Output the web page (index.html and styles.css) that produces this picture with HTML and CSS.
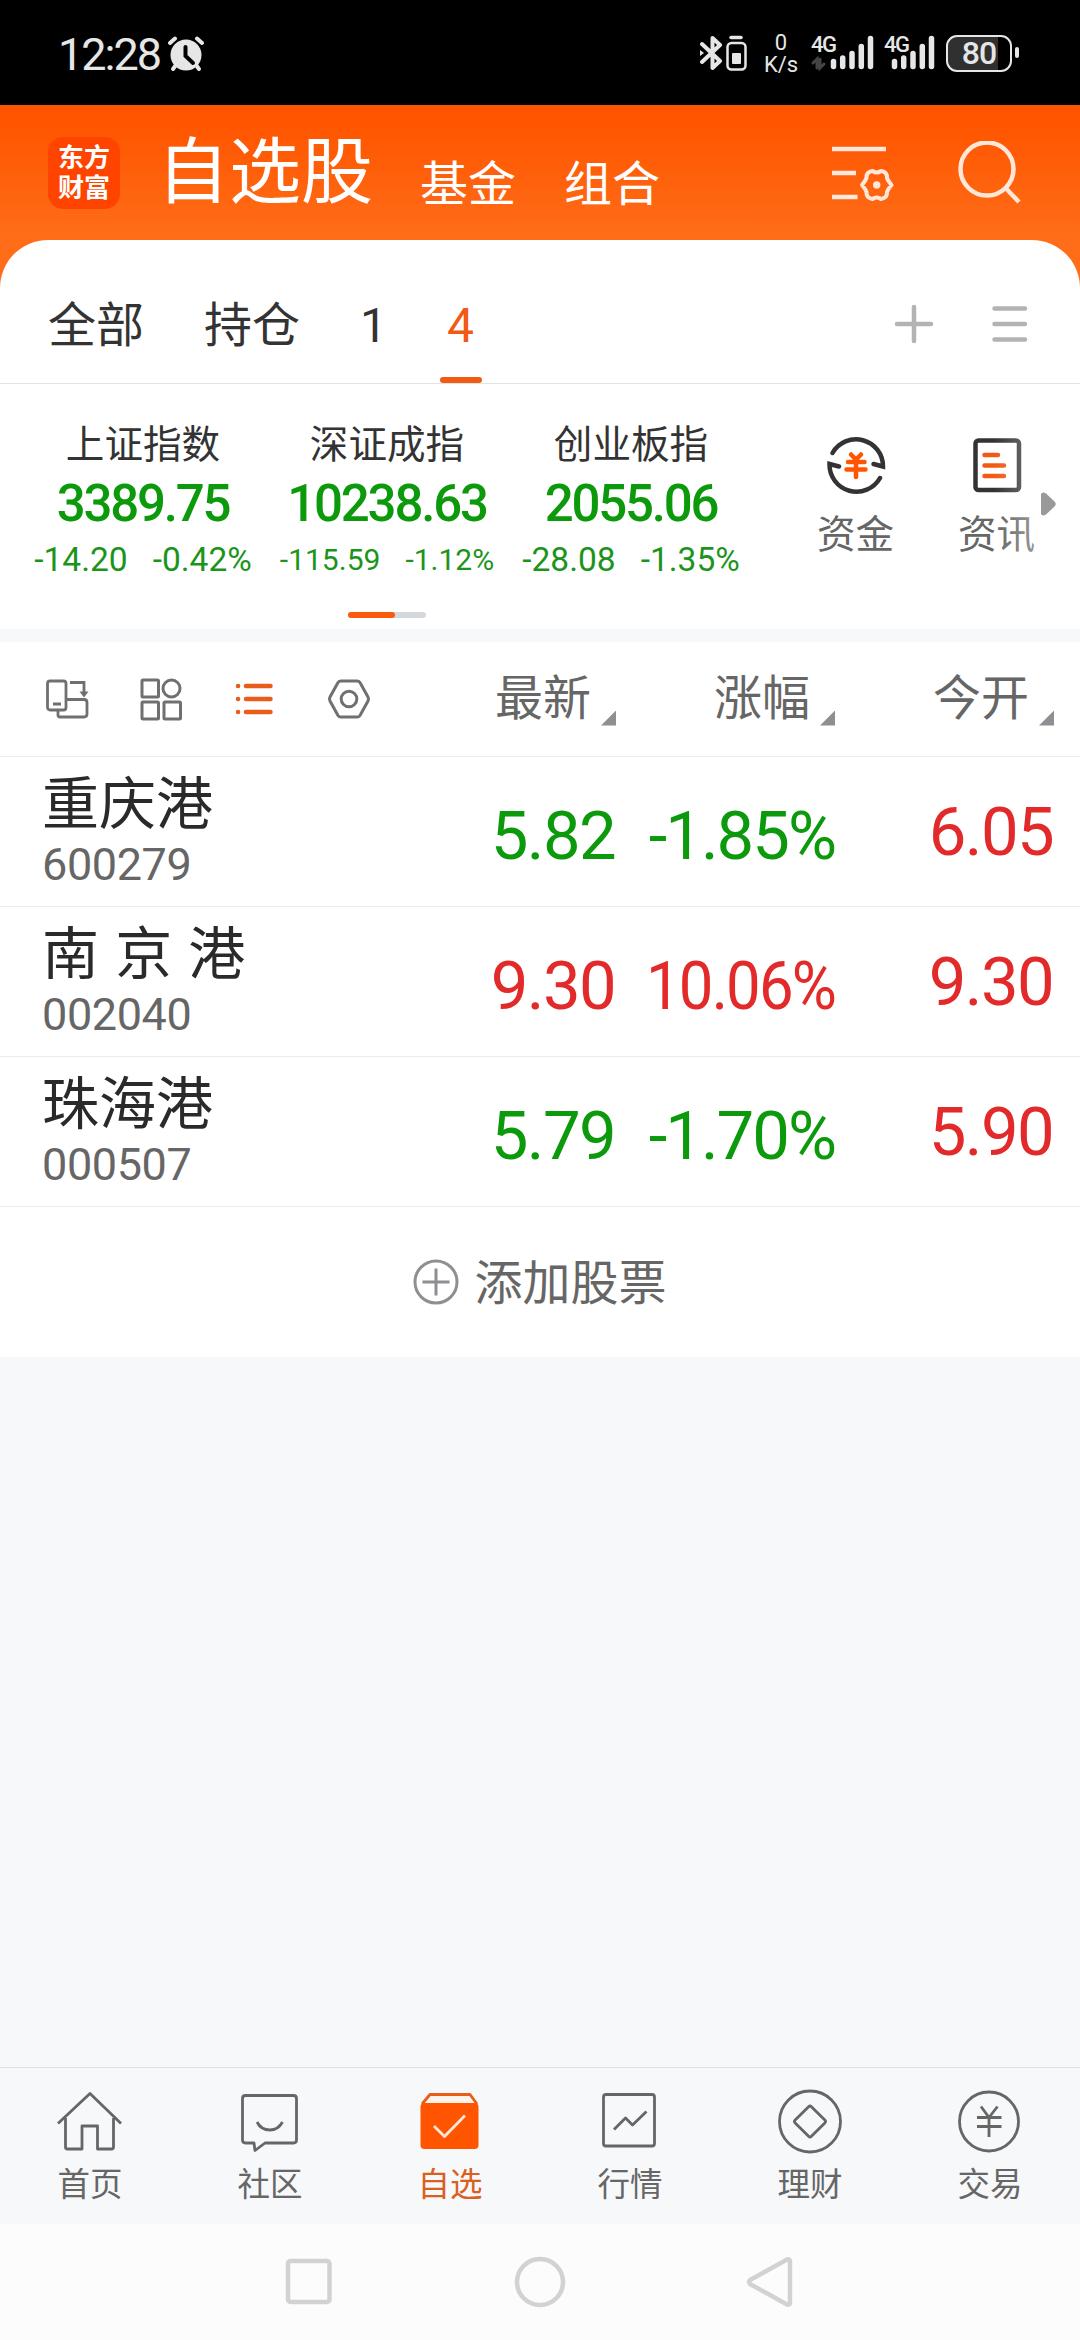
FILE: index.html
```html
<!DOCTYPE html>
<html lang="zh-CN">
<head>
<meta charset="UTF-8">
<meta name="viewport" content="width=device-width, initial-scale=1.0">
<title>自选股</title>
<link rel="stylesheet" href="styles.css">
</head>
<body>

<!-- Status bar -->
<div class="statusbar">
    <span class="clock">12:28</span>
    <svg class="alarm" width="36" height="36" viewBox="0 0 36 36">
        <circle cx="18" cy="19" r="15.5" fill="#e6e6e6"/>
        <path d="M2 7 L7 2.5 M34 7 L29 2.5" stroke="#e6e6e6" stroke-width="4" stroke-linecap="round"/>
        <path d="M8 29 L5 33 M28 29 L31 33" stroke="#e6e6e6" stroke-width="4" stroke-linecap="round"/>
        <path d="M17.5 11 V20 L25 27" fill="none" stroke="#000" stroke-width="4" stroke-linecap="round"/>
    </svg>
    <div class="status-right">
        <svg width="48" height="36" viewBox="0 0 48 36" fill="none" stroke="#e6e6e6">
            <path d="M2 9 L20 26 L12.500 33 V3 L20 10 L2 27" stroke-width="4" stroke-linejoin="round" stroke-linecap="round"/>
            <path d="M0 15 L4 18 L0 21 Z" fill="#e6e6e6" stroke="none"/>
            <path d="M31 2.500 H41" stroke-width="3.500" stroke-linecap="round"/>
            <rect x="27.500" y="8" width="18" height="26.500" rx="4" stroke-width="2.500"/>
            <rect x="32" y="18" width="9" height="11" rx="1" fill="#e6e6e6" stroke="none"/>
        </svg>
        <div class="speed"><span>0</span><span>K/s</span></div>
        <div class="signal">
            <span class="net">4G</span>
            <svg width="64" height="36" viewBox="0 0 64 36" stroke-linecap="round">
                <path d="M22.500 26.500 V31.500 M31.700 23 V31.500 M41 18.500 V31.500 M50.300 11.500 V31.500 M59.500 3.500 V31.500" stroke="#e6e6e6" stroke-width="5.500"/>
                <path d="M2 28 L6 24 V33 M9 24 V33 L13 29" fill="none" stroke="#444" stroke-width="3"/>
            </svg>
        </div>
        <div class="signal second">
            <span class="net">4G</span>
            <svg width="52" height="36" viewBox="0 0 52 36" stroke-linecap="round">
                <path d="M10.500 26.500 V31.500 M19.700 23 V31.500 M29 18.500 V31.500 M38.300 11.500 V31.500 M47.500 3.500 V31.500" stroke="#e6e6e6" stroke-width="5.500"/>
            </svg>
        </div>
        <div class="battery"><span>80</span></div>
        <i class="battery-tip"></i>
    </div>
</div>

<!-- Header -->
<header class="header">
    <div class="logo"><span>东方</span><span>财富</span></div>
    <h1 class="title">自选股</h1>
    <a class="header-link">基金</a>
    <a class="header-link">组合</a>
    <svg class="icon-config" width="66" height="60" viewBox="0 0 66 60" fill="none" stroke="#ffe8d9" stroke-width="4.500">
        <path d="M0 6 H54 M0 30 H24 M0 54 H25.500"/>
        <path d="M40.500 28 Q44.700 31 49 28 Q55.500 29 55 35 Q56 38 59.500 42 Q56 46 55 49 Q55.500 55 49 56 Q44.700 53 40.500 56 Q34 55 34.500 49 Q33.500 46 30 42 Q33.500 38 34.500 35 Q34 29 40.500 28 Z" stroke-linejoin="round" stroke-width="4"/>
        <circle cx="44.700" cy="42" r="3.700" fill="#ffe8d9" stroke="none"/>
    </svg>
    <svg class="icon-search" width="64" height="64" viewBox="0 0 64 64" fill="none" stroke="#ffe8d9" stroke-width="4.500">
        <circle cx="29" cy="28" r="26.500"/>
        <path d="M47.500 47 L61 61"/>
    </svg>
</header>

<!-- Group tabs -->
<nav class="groups">
    <a class="group">全部</a>
    <a class="group">持仓</a>
    <a class="group">1</a>
    <a class="group active">4</a>
    <svg class="icon-add" width="40" height="40" viewBox="0 0 40 40" stroke="#b3b3b3" stroke-width="4.500" stroke-linecap="round">
        <path d="M3 20 H37 M20 3 V37"/>
    </svg>
    <svg class="icon-menu" width="38" height="40" viewBox="0 0 38 40" stroke="#b3b3b3" stroke-width="4.500" stroke-linecap="round">
        <path d="M3.500 4.500 H34 M3.500 20 H34 M3.500 35.500 H34"/>
    </svg>
</nav>

<!-- Market indexes -->
<section class="market">
    <div class="indexes">
        <div class="index-list">
            <div class="index">
                <div class="index-name">上证指数</div>
                <div class="index-value">3389.75</div>
                <div class="index-change"><span>-14.20</span><span>-0.42%</span></div>
            </div>
            <div class="index">
                <div class="index-name">深证成指</div>
                <div class="index-value">10238.63</div>
                <div class="index-change small"><span>-115.59</span><span>-1.12%</span></div>
            </div>
            <div class="index">
                <div class="index-name">创业板指</div>
                <div class="index-value">2055.06</div>
                <div class="index-change"><span>-28.08</span><span>-1.35%</span></div>
            </div>
        </div>
        <div class="pager"><i></i></div>
    </div>
    <div class="shortcuts">
        <a class="shortcut">
            <svg width="60" height="60" viewBox="0 0 60 60" fill="none" stroke="#333" stroke-width="4.500" stroke-linecap="round">
                <path d="M6.500 18 A27 27 0 0 1 57 31.500 L47.500 29"/>
                <path d="M54 43 A27 27 0 0 1 3.500 29 L13 31.500"/>
                <path d="M25 19.500 L30 24.500 L35 19.500 M22 27 H38.500 M20.500 34.500 H39.500 M30 25 V42" stroke="#ff5500" stroke-width="4.500"/>
            </svg>
            <span>资金</span>
        </a>
        <a class="shortcut">
            <svg width="60" height="60" viewBox="0 0 60 60" fill="none" stroke="#333" stroke-width="4.500" stroke-linecap="round">
                <rect x="8.500" y="5.500" width="43.500" height="49.500" rx="3"/>
                <path d="M17.500 20 H31 M17.500 30.500 H37 M17.500 41 H37" stroke="#f05a14"/>
            </svg>
            <span>资讯</span>
        </a>
    </div>
    <svg class="more-arrow" width="15" height="24" viewBox="0 0 15 24">
        <path d="M0 2.500 Q1 -1 5 1.500 L13.500 9.500 Q16 12 13.500 14.500 L5 22.500 Q1 25 0 21.500 Z" fill="#999"/>
    </svg>
</section>

<!-- Stock table -->
<section class="stocks">
    <div class="row head">
        <div class="tools">
            <svg width="44" height="44" viewBox="0 0 44 44" fill="none" stroke="#707070" stroke-width="2.800">
                <rect x="2.500" y="4" width="18.500" height="29" rx="2.500"/>
                <path d="M8 27 H16 M21 22.500 H39 Q42 22.500 42 25.500 V37 Q42 40 39 40 H15 Q13 40 13 38 V33"/>
                <path d="M25 5.500 H39 V16"/>
                <path d="M34.500 14.500 H43.500 L39 20.500 Z" fill="#707070" stroke="none"/>
            </svg>
            <svg width="44" height="44" viewBox="0 0 44 44" fill="none" stroke="#707070" stroke-width="3">
                <rect x="3" y="3" width="16.500" height="17" rx="1"/>
                <circle cx="32.500" cy="11.500" r="8.500"/>
                <rect x="3" y="25" width="16.500" height="17" rx="1"/>
                <rect x="25" y="25" width="16.500" height="17" rx="1"/>
            </svg>
            <svg width="44" height="44" viewBox="0 0 44 44" stroke="#ea5c1a" stroke-width="4.500" stroke-linecap="round">
                <path d="M5 9 H5.100 M5 22 H5.100 M5 35 H5.100 M13 9 H37.500 M13 22 H37.500 M13 35 H37.500"/>
            </svg>
            <svg width="44" height="44" viewBox="0 0 44 44" fill="none" stroke="#707070" stroke-width="3">
                <path d="M14 4 H30 Q32 4 33 5.500 L41 20 Q42 22 41 24 L33 38.500 Q32 40 30 40 H14 Q12 40 11 38.500 L3 24 Q2 22 3 20 L11 5.500 Q12 4 14 4 Z"/>
                <circle cx="22" cy="22" r="7.800"/>
            </svg>
        </div>
        <div class="th">最新<i></i></div>
        <div class="th">涨幅<i></i></div>
        <div class="th">今开<i></i></div>
    </div>
    <div class="row">
        <div class="stock">
            <div class="stock-name">重庆港</div>
            <div class="stock-code">600279</div>
        </div>
        <div class="num down">5.82</div>
        <div class="num pct down">-1.85%</div>
        <div class="num open up">6.05</div>
    </div>
    <div class="row">
        <div class="stock">
            <div class="stock-name">南 京 港</div>
            <div class="stock-code">002040</div>
        </div>
        <div class="num up">9.30</div>
        <div class="num pct long up">10.06%</div>
        <div class="num open up">9.30</div>
    </div>
    <div class="row">
        <div class="stock">
            <div class="stock-name">珠海港</div>
            <div class="stock-code">000507</div>
        </div>
        <div class="num down">5.79</div>
        <div class="num pct down">-1.70%</div>
        <div class="num open up">5.90</div>
    </div>
    <div class="add-stock">
        <svg width="46" height="46" viewBox="0 0 46 46" fill="none" stroke="#8e8e93" stroke-width="3">
            <circle cx="23" cy="23" r="21"/>
            <path d="M9.500 23 H36.500 M23 9.500 V36.500"/>
        </svg>
        <span>添加股票</span>
    </div>
</section>

<!-- Bottom tabs -->
<nav class="tabbar">
    <a class="tab">
        <svg width="72" height="72" viewBox="0 0 72 72">
            <path d="M4 37.500 L36 7.500 L67 37.500" />
            <path d="M11.500 32 V61 Q11.500 63 13.500 63 H28 V40 H43.500 V63 H57.500 Q59.500 63 59.500 61 V32"/>
        </svg>
        <span>首页</span>
    </a>
    <a class="tab">
        <svg width="72" height="72" viewBox="0 0 72 72">
            <path d="M11.500 9.500 H59.500 Q62.500 9.500 62.500 12.500 V54 Q62.500 57 59.500 57 H31 L21 64.500 L20 57 H11.500 Q8.500 57 8.500 54 V12.500 Q8.500 9.500 11.500 9.500 Z"/>
            <path d="M23 36 Q27 44 36 44 Q44 44 48.500 36"/>
        </svg>
        <span>社区</span>
    </a>
    <a class="tab active">
        <svg width="72" height="72" viewBox="0 0 72 72">
            <path d="M8 18 L16 8.500 H56 L63 18" fill="#fff3ec" stroke="#ea5c1a"/>
            <rect x="6.500" y="17" width="58" height="46" rx="4" fill="#ff5500" stroke="none"/>
            <path d="M20 40 L30.500 50.500 L51 29.500" stroke="#ffe8d9"/>
        </svg>
        <span>自选</span>
    </a>
    <a class="tab">
        <svg width="72" height="72" viewBox="0 0 72 72">
            <rect x="9.500" y="8.500" width="51" height="51.500" rx="2.500"/>
            <path d="M20 43.500 L31.500 32 L38.500 39 L52.500 25.500"/>
        </svg>
        <span>行情</span>
    </a>
    <a class="tab">
        <svg width="72" height="72" viewBox="0 0 72 72">
            <circle cx="36" cy="35.500" r="30.500"/>
            <rect x="24.500" y="24" width="23" height="23" rx="2" transform="rotate(45 36 35.500)"/>
        </svg>
        <span>理财</span>
    </a>
    <a class="tab">
        <svg width="72" height="72" viewBox="0 0 72 72">
            <circle cx="35" cy="35.500" r="29.500"/>
            <path d="M27 20.500 L35 31.500 L43.500 20.500 M23 31.500 H47.500 M23 40.500 H47.500 M35 31.500 V51"/>
        </svg>
        <span>交易</span>
    </a>
</nav>

<!-- System navigation -->
<div class="sysnav">
    <svg width="54" height="54" viewBox="0 0 54 54"><rect x="6" y="6" width="41.500" height="41" rx="2.500"/></svg>
    <svg width="54" height="54" viewBox="0 0 54 54"><circle cx="27" cy="27" r="23"/></svg>
    <svg width="54" height="54" viewBox="0 0 54 54"><path d="M6 25 L43 4.500 Q46 3.500 46 6.500 V47.500 Q46 50.500 43 49.500 L6 29 Q4 27 6 25 Z"/></svg>
</div>

</body>
</html>
```
FILE: styles.css
```css
* {
    box-sizing: border-box;
}

body {
    margin: 0;
    width: 1080px;
    height: 2340px;
    display: flex;
    flex-direction: column;
    background-color: #f6f8fa;
    color: #333;
    font-family: Roboto, "Noto Sans CJK SC", sans-serif;
    overflow: hidden;
}

svg {
    display: block;
    flex: none;
}

/* Status bar */
.statusbar {
    height: 105px;
    padding: 0 61px 0 58px;
    display: flex;
    align-items: center;
    background-color: #000;
    color: #e6e6e6;
}

.clock {
    font-size: 45px;
    line-height: 60px;
    letter-spacing: -2px;
    padding-top: 4px;
}

.alarm {
    margin-left: 8px;
    margin-top: 2px;
}

.status-right {
    margin-left: auto;
    display: flex;
    align-items: center;
}

.speed {
    width: 36px;
    margin-left: 15px;
    padding-top: 3px;
    display: flex;
    flex-direction: column;
    align-items: center;
    font-size: 22px;
    line-height: 22px;
}

.signal {
    position: relative;
    margin-left: 12px;
}

.signal.second {
    margin-left: 9px;
}

.net {
    position: absolute;
    top: -1px;
    left: 0;
    font-size: 22px;
    line-height: 22px;
    font-weight: 500;
    letter-spacing: -1.5px;
}

.battery {
    width: 66px;
    height: 37px;
    margin-left: 10px;
    margin-top: 2px;
    border: 2.5px solid #e6e6e6;
    border-radius: 11px;
    background: linear-gradient(90deg, #303030 80%, #000 80%);
    text-align: center;
    font-size: 32px;
    line-height: 33px;
    font-weight: 500;
    letter-spacing: -1px;
}

.battery-tip {
    width: 4px;
    height: 11px;
    margin-left: 3px;
    border-radius: 2px;
    background-color: #e6e6e6;
}

/* Header */
.header {
    height: 183px;
    padding: 0 58px 48px 48px;
    display: flex;
    align-items: center;
    background: linear-gradient(#ff5500 10%, #ff6d18 72%);
    color: #fff;
}

.logo {
    width: 72px;
    height: 72px;
    display: flex;
    flex-direction: column;
    align-items: center;
    justify-content: center;
    border-radius: 15px;
    background-color: #ff4400;
    font-size: 26px;
    line-height: 30px;
    font-weight: 700;
}

.title {
    margin: 0 0 0 37px;
    font-size: 72px;
    line-height: 80px;
    font-weight: 400;
}

.header-link {
    margin: 25px 0 0 47px;
    font-size: 48px;
    line-height: 56px;
}

.header-link + .header-link {
    margin-left: 48px;
}

.icon-config {
    margin-left: auto;
}

.icon-search {
    margin-left: 60px;
}

/* Group tabs */
.groups {
    height: 144px;
    margin-top: -48px;
    padding: 0 51px 0 48px;
    display: flex;
    align-items: center;
    background-color: #fff;
    border-radius: 48px 48px 0 0;
    border-bottom: 1px solid #e4e4e4;
}

.group {
    height: 143px;
    margin-right: 60px;
    font-size: 48px;
    line-height: 171px;
}

.group.active {
    position: relative;
    color: #f05a14;
}

.group.active::after {
    content: "";
    position: absolute;
    left: -7px;
    bottom: 0;
    width: 42px;
    height: 6px;
    border-radius: 3px;
    background-color: #f05a14;
}

.icon-add {
    margin: 24px 0 0 auto;
}

.icon-menu {
    margin: 24px 0 0 57px;
}

/* Market indexes */
.market {
    position: relative;
    height: 245px;
    padding-left: 21px;
    display: flex;
    background-color: #fff;
}

.indexes {
    width: 732px;
    padding-top: 35px;
}

.index-list {
    display: grid;
    grid-template-columns: repeat(3, 244px);
    text-align: center;
    white-space: nowrap;
}

.index-name {
    font-size: 38.6px;
    line-height: 52px;
}

.index-value {
    font-size: 51px;
    line-height: 66px;
    font-weight: 500;
    letter-spacing: -2.2px;
    color: #0c9a0c;
}

.index-change {
    display: flex;
    justify-content: center;
    gap: 25px;
    font-size: 33.5px;
    line-height: 46px;
    color: #1c941c;
}

.index-change.small {
    font-size: 30px;
}

.pager {
    width: 78px;
    height: 6px;
    margin: 29px auto 0;
    border-radius: 3px;
    background-color: #d4d7dc;
}

.pager i {
    display: block;
    width: 47px;
    height: 6px;
    border-radius: 3px;
    background-color: #f95a0c;
}

.shortcuts {
    margin-left: 32px;
    padding-top: 51px;
    display: flex;
}

.shortcut {
    width: 141px;
    display: flex;
    flex-direction: column;
    align-items: center;
    gap: 15px;
    font-size: 38.6px;
    line-height: 50px;
    color: #666;
}

/* fades the last shortcut out towards the arrow */
.market::after {
    content: "";
    position: absolute;
    top: 40px;
    right: 36px;
    width: 50px;
    height: 140px;
    background: linear-gradient(90deg, rgba(255, 255, 255, 0), rgba(255, 255, 255, 0.4));
}

.more-arrow {
    position: absolute;
    z-index: 1;
    top: 108px;
    right: 24px;
}

/* Stock table */
.stocks {
    margin-top: 13px;
    background-color: #fff;
}

.row {
    height: 150px;
    padding: 0 26px 0 42px;
    display: grid;
    grid-template-columns: 1fr 219px 219px 219px;
    align-items: center;
    border-bottom: 1px solid #ebebeb;
}

.row.head {
    height: 115px;
}

.tools {
    display: flex;
    gap: 50px;
    padding-left: 3px;
}

.th {
    display: flex;
    justify-content: flex-end;
    align-items: center;
    gap: 10px;
    font-size: 48px;
    line-height: 56px;
    color: #666;
}

.th i {
    width: 15px;
    height: 15px;
    margin-top: 38px;
    background-color: #8e8e93;
    clip-path: polygon(100% 0, 100% 100%, 0 100%);
}

.stock-name {
    font-size: 57px;
    line-height: 66px;
    word-spacing: 2px;
    white-space: nowrap;
    color: #2a2a2a;
}

.stock-code {
    font-size: 45px;
    line-height: 54px;
    letter-spacing: -0.4px;
    color: #666;
}

.num {
    padding: 8px 1px 0 0;
    font-size: 67px;
    line-height: 76px;
    letter-spacing: -1.6px;
    text-align: right;
    white-space: nowrap;
}

.pct {
    padding-right: 0;
    letter-spacing: -2px;
}

.pct.long {
    transform: scaleX(0.92);
    transform-origin: right;
}

.open {
    padding-top: 0;
}

.up {
    color: #e22a2a;
}

.down {
    color: #0c9a0c;
}

.add-stock {
    height: 150px;
    display: flex;
    align-items: center;
    justify-content: center;
    gap: 15px;
    font-size: 48px;
    line-height: 56px;
    color: #666;
}

.add-stock span {
    padding-top: 3px;
}

/* Bottom tabs */
.tabbar {
    height: 157px;
    margin-top: auto;
    padding-top: 18px;
    display: grid;
    grid-template-columns: repeat(6, 1fr);
    background-color: #f7f8fa;
    border-top: 1px solid #dfe0e2;
}

.tab {
    display: flex;
    flex-direction: column;
    align-items: center;
    gap: 6px;
    font-size: 32.5px;
    line-height: 42px;
    color: #666;
}

.tab svg {
    fill: none;
    stroke: #666;
    stroke-width: 2.8;
    stroke-linejoin: round;
}

.tab.active {
    color: #d9601f;
}

/* System navigation */
.sysnav {
    height: 116px;
    display: flex;
    align-items: center;
    justify-content: center;
    gap: 177px;
    background-color: #fcfcfc;
}

.sysnav svg {
    fill: none;
    stroke: #d2d2d2;
    stroke-width: 4.5;
}
```
